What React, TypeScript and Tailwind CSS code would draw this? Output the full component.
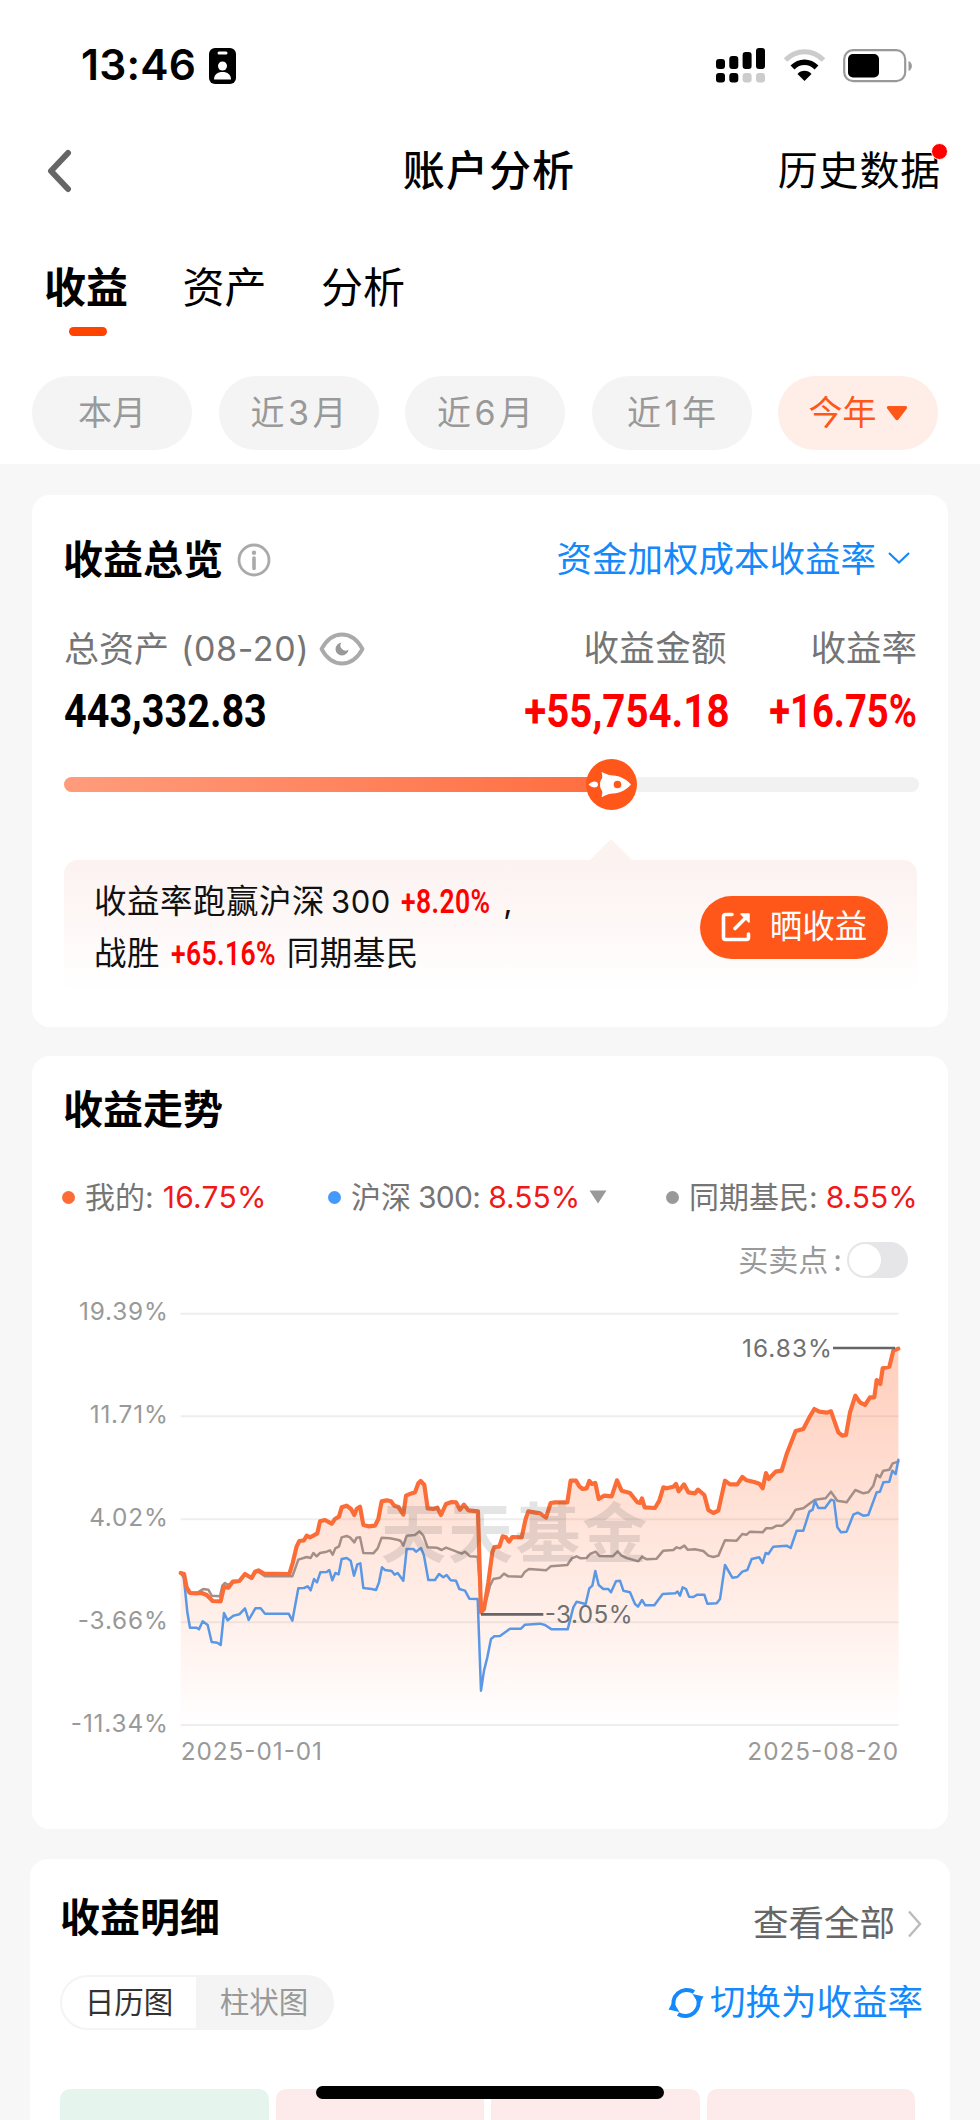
import React, { useState } from 'react';

type Point = [number, number];

const PERIODS = [['本月'], ['近', '3', '月'], ['近', '6', '月'], ['近', '1', '年']];
const TABS = ['收益', '资产', '分析'];

const parse = (s: string): Point[] =>
  s.trim().split(/\s+/).map((p) => p.split(',').map(Number) as Point);

const MINE = parse(`
62,402 72,405 80,445 90,462 110,463 125,462 140,468 150,478 158,486 182,487 192,443 205,446 218,428 238,426
255,405 275,417 285,398 295,394 312,404 388,405 398,372 410,322 418,306 432,304 440,290 450,295 460,290 472,283
480,247 495,243 508,250 515,254 525,240 537,233 545,205 560,200 573,210 583,228 590,210 600,203 610,258 625,262
645,260 655,240 665,187 680,184 693,187 703,200 715,204 730,227 738,170 752,164 765,160 775,133 782,126 793,138
803,208 820,210 832,206 843,228 858,195 875,189 888,190 900,212 912,197 925,214 954,217 963,520 972,510 985,430
997,340 1003,324 1018,323 1028,292 1038,295 1047,308 1057,294 1085,295 1097,240 1105,217 1140,223 1158,236
1172,192 1185,190 1222,190 1232,125 1248,125 1258,142 1268,150 1280,148 1288,126 1296,135 1306,132 1316,180
1332,170 1355,172 1371,124 1385,155 1410,162 1432,190 1440,192 1446,178 1454,205 1485,207 1498,185 1510,145
1520,148 1540,143 1548,135 1556,157 1572,136 1585,160 1605,163 1614,152 1633,168 1645,213 1660,222 1675,215
1695,125 1710,136 1732,136 1747,114 1760,124 1785,130 1798,134 1808,148 1818,102 1826,120 1847,98 1865,95
1880,45 1907,-24 1930,-30 1948,-65 1963,-90 1978,-82 2000,-79 2013,-83 2035,-20 2047,-10 2058,-12 2070,-80
2086,-130 2100,-110 2115,-102 2130,-125 2143,-125 2150,-177 2161,-165 2168,-212 2188,-217 2200,-265 2215,-271`);

const PEERS = parse(`
62,402 75,420 85,460 110,462 122,455 130,450 145,452 155,470 180,472 187,440 195,432 205,438 218,430 238,428
255,408 275,419 285,402 295,398 315,412 397,412 405,390 415,362 440,354 452,357 460,342 470,352 480,342 500,338
510,334 518,347 526,328 537,322 545,295 560,291 570,295 583,310 590,296 600,295 610,342 640,343 653,328 665,296
690,298 715,303 722,306 730,320 740,290 765,288 778,277 790,290 803,325 830,326 845,333 858,326 880,334 905,344
915,338 930,352 953,353 965,510 980,480 990,440 1000,420 1020,416 1032,404 1045,412 1085,413 1095,398 1107,390
1158,394 1172,382 1222,378 1235,358 1250,352 1262,358 1280,357 1290,345 1307,338 1318,351 1358,352 1373,337
1385,350 1400,357 1425,364 1435,367 1446,353 1460,361 1490,359 1510,335 1540,333 1550,325 1560,328 1573,320
1583,332 1605,331 1630,336 1645,350 1660,354 1675,350 1695,304 1730,305 1747,285 1760,287 1770,278 1808,280
1818,268 1835,268 1850,260 1867,260 1890,240 1907,212 1930,208 1950,193 1965,182 1997,178 2013,158 2032,185
2060,190 2086,153 2110,163 2125,160 2140,140 2150,107 2160,115 2170,95 2188,92 2198,73 2215,68`);

const CSI300 = parse(`
70,405 75,450 82,520 90,566 110,566 117,571 128,547 143,558 155,609 172,611 182,618 192,522 203,544 220,530
238,526 255,508 266,543 286,508 302,508 315,524 386,524 397,545 415,448 432,447 443,442 452,454 462,420 471,430
481,400 500,399 508,393 517,424 526,402 536,406 545,360 560,357 572,365 582,410 592,376 601,373 610,447 635,450
648,453 657,430 666,385 675,393 695,396 704,407 713,402 730,425 740,330 760,330 768,338 783,327 792,350 805,423
825,423 837,405 850,415 860,408 872,424 888,425 898,450 915,455 928,479 953,480 963,755 972,695 982,655 993,600
1003,592 1020,591 1050,569 1083,569 1095,557 1140,554 1155,558 1175,571 1223,571 1240,505 1250,488 1277,495
1288,448 1297,440 1306,396 1316,438 1330,450 1345,450 1353,460 1368,427 1380,425 1390,455 1410,460 1425,495
1434,503 1446,483 1456,499 1483,499 1508,465 1545,463 1553,458 1560,470 1568,445 1578,450 1587,473 1600,474
1612,467 1633,467 1642,494 1670,493 1680,480 1695,378 1717,416 1732,414 1747,398 1762,393 1775,360 1798,355
1808,372 1817,342 1825,345 1840,323 1880,320 1892,327 1910,275 1930,275 1948,218 1958,212 1965,185 1975,207
1995,207 2013,182 2022,185 2032,265 2043,280 2060,278 2080,227 2093,221 2110,230 2125,228 2150,160 2160,158
2170,130 2188,128 2197,95 2207,105 2215,62`);

const toPath = (pts: Point[]) => 'M' + pts.map(([x, y]) => `${x} ${y}`).join('L');

const GRID = [
  { y: -376, label: '19.39%' },
  { y: -68, label: '11.71%' },
  { y: 241, label: '4.02%' },
  { y: 550, label: '-3.66%' },
  { y: 858, label: '-11.34%' },
];

const StatusBar = () => (
  <div className="flex h-[100px] items-center justify-between pl-[81px] pr-[67px] pt-[31px]">
    <div className="flex items-center gap-[13px]">
      <span className="text-[42.500px] font-semibold leading-none tracking-[0.200px]">13:46</span>
      <svg width="27" height="36" viewBox="0 0 27 36">
        <rect width="27" height="36" rx="6" fill="#000" />
        <rect x="8.500" y="3.500" width="10" height="3" rx="1.500" fill="#fff" />
        <circle cx="13.500" cy="18" r="4.500" fill="#fff" />
        <path d="M5 31.500c0-5 3.500-7.500 8.500-7.500s8.500 2.500 8.500 7.500z" fill="#fff" />
      </svg>
    </div>
    <div className="flex items-center">
      <svg width="49" height="36" viewBox="0 0 49 36">
        <rect x="0" y="11" width="9" height="10" rx="3" />
        <rect x="13.300" y="8" width="9" height="13" rx="3" />
        <rect x="26.600" y="4" width="9" height="17" rx="3" />
        <rect x="40" y="0" width="9" height="21" rx="3" />
        <rect x="0" y="25" width="9" height="9.500" rx="3" />
        <rect x="13.300" y="25" width="9" height="9.500" rx="3" />
        <rect x="26.600" y="25" width="9" height="9.500" rx="3" fill="#ccc" />
        <rect x="40" y="25" width="9" height="9.500" rx="3" fill="#ccc" />
      </svg>
      <svg className="ml-[18px]" width="43" height="36" viewBox="0 0 43 36" fill="none">
        <path d="M2.500 12C13.500 1 29.500 1 40.500 12" stroke="#ccc" strokeWidth="5" />
        <path d="M9.500 19.500C16.500 12.500 26.500 12.500 33.500 19.500" stroke="#000" strokeWidth="5.500" />
        <path d="M21.500 33L14.500 26c3.500-4.200 10.500-4.200 14 0z" fill="#000" />
      </svg>
      <svg className="ml-[17px]" width="70" height="36" viewBox="0 0 70 36" fill="none">
        <rect x="1.200" y="2.200" width="61" height="31" rx="9" stroke="#999" strokeWidth="2.200" />
        <rect x="5" y="6" width="31" height="23.500" rx="5" fill="#000" />
        <path d="M65.500 13c4.500 1.500 4.500 8.500 0 10z" fill="#999" />
      </svg>
    </div>
  </div>
);

const NavBar = () => (
  <div className="grid h-[140px] grid-cols-3 items-center pl-[46px] pr-[39px] pt-[2px]">
    <svg width="26" height="44" viewBox="0 0 26 44" fill="none">
      <path d="M22 4L5 22l17 18" stroke="#666" strokeWidth="6" strokeLinecap="round" strokeLinejoin="round" />
    </svg>
    <h1 className="-ml-[9px] text-center text-[42px] font-medium leading-none tracking-[1.100px]">账户分析</h1>
    <div className="relative justify-self-end text-[40px] leading-none tracking-[0.800px]">
      历史数据
      <span className="absolute -right-[7px] -top-[8px] h-[17px] w-[17px] rounded-full border border-white bg-[#f00]" />
    </div>
  </div>
);

const Tabs = () => {
  const [tab, setTab] = useState('收益');
  return (
    <div className="flex h-[136px] gap-[54.500px] pl-[44px] pt-[25px]">
      {TABS.map((t) => (
        <button key={t} onClick={() => setTab(t)} className="flex flex-col items-center">
          <span className={t === tab ? 'text-[42px] font-bold leading-[46px]' : 'text-[42px] leading-[46px]'}>{t}</span>
          {t === tab && <span className="ml-[3px] mt-[16px] h-[9px] w-[38px] rounded-full bg-[#ff4400]" />}
        </button>
      ))}
    </div>
  );
};

const Periods = () => (
  <div className="flex h-[88px] gap-[26.500px] px-[32px]">
    {PERIODS.map((p) => (
      <button
        key={p.join('')}
        className="flex h-[74px] w-[160px] items-center justify-center gap-[3.500px] rounded-full bg-[#f4f4f4] text-[34px] leading-none text-[#999]"
      >
        {p.map((part) => (
          <span key={part}>{part}</span>
        ))}
      </button>
    ))}
    <button className="flex h-[74px] w-[160px] items-center justify-center gap-[9px] rounded-full bg-[#ffeee8] text-[34px] leading-none text-[#ff5719]">
      今年
      <svg width="22" height="15" viewBox="0 0 22 15">
        <path d="M2.500 0h17c1.500 0 2.200 1.500 1.200 2.700L12.500 13.500c-.8 1-2.200 1-3 0L1.300 2.700C.3 1.500 1 0 2.500 0z" fill="#ff5719" />
      </svg>
    </button>
  </div>
);

const Din: React.FC<{ className: string; children: React.ReactNode }> = ({ className, children }) => (
  <span className={`inline-block font-['Roboto'] leading-none ${className}`}>{children}</span>
);

const Overview = () => (
  <section className="h-[532px] rounded-[18px] bg-white px-[31px] pt-[40px]">
    <div className="flex h-[50px] items-center justify-between">
      <div className="flex items-center gap-[14px]">
        <h2 className="text-[40px] font-bold leading-none">收益总览</h2>
        <svg width="34" height="34" viewBox="0 0 34 34" fill="none" stroke="#aaa">
          <circle cx="17" cy="17" r="15" strokeWidth="2.800" />
          <path d="M17 15v10.500" strokeWidth="3.600" strokeLinecap="round" />
          <circle cx="17" cy="9.700" r="2.200" fill="#aaa" stroke="none" />
        </svg>
      </div>
      <button className="mr-[6px] flex items-center gap-[11px] text-[35.500px] leading-none text-[#1389fb]">
        资金加权成本收益率
        <svg className="-mt-[4px]" width="24" height="14" viewBox="0 0 24 14" fill="none">
          <path d="M2 2l10 9.500L22 2" stroke="#1389fb" strokeWidth="2.200" />
        </svg>
      </button>
    </div>

    <div className="ml-[1px] mt-[39px] flex justify-between">
      <div>
        <div className="flex h-[50px] items-center text-[35px] leading-none text-[#757575]">
          总资产<span className="ml-[12px] text-[34px] tracking-[0.600px]">(08-20)</span>
          <svg className="ml-[10px]" width="46" height="34" viewBox="0 0 46 34" fill="none">
            <path d="M2.500 17C8 7 15 2.500 23 2.500S38 7 43.500 17C38 27 31 31.500 23 31.500S8 27 2.500 17z" stroke="#aaa" strokeWidth="3.800" strokeLinejoin="round" />
            <path d="M22.500 10.500a6.500 6.500 0 1 0 7 7 5 5 0 0 1-7-7z" fill="#999" />
          </svg>
        </div>
        <Din className="mt-[14px] origin-left scale-x-[0.860] text-[46px] font-bold text-black">443,332.83</Din>
      </div>
      <div className="flex gap-[41px] text-right">
        <div className="w-[205px]">
          <div className="mr-[2px] flex h-[50px] items-center justify-end text-[35.500px] leading-none tracking-[0.400px] text-[#757575]">收益金额</div>
          <Din className="mt-[14px] -ml-[40px] origin-right scale-x-[0.875] text-[46px] font-bold text-[#f00]">+55,754.18</Din>
        </div>
        <div className="w-[147px]">
          <div className="flex h-[50px] items-center justify-end text-[35.500px] leading-none text-[#757575]">收益率</div>
          <Din className="mt-[14px] -ml-[40px] origin-right scale-x-[0.830] text-[46px] font-bold text-[#f00]">+16.75%</Din>
        </div>
      </div>
    </div>

    <div className="relative ml-[1px] mt-[43px] h-[15px] w-[855px] rounded-full bg-[#f1f1f1]">
      <div className="h-full w-[548px] rounded-l-full bg-linear-to-r from-[#ff9c7c] to-[#ff6c3d]" />
      <svg className="absolute left-[522px] top-[-18px]" width="51" height="51" viewBox="0 0 51 51">
        <circle cx="25.500" cy="25.500" r="25.500" fill="#ff5719" />
        <path d="M15.500 13c1 0 2 .8 3 1.300 2.500 1.200 5 2 8.500 2.200 7 .5 13 3.500 18 9-5 5.500-11 8.500-18 9-3.500.2-6 1-8.500 2.200-1 .5-2 1.300-3 1.300.8-2.500 1-4.500.5-6.500-1.500-1.500-2-3.700-2-6s.5-4.500 2-6c.5-2 .3-4-.5-6.500z" fill="#fff" />
        <circle cx="31.500" cy="25.500" r="3.800" fill="#ff5719" />
        <path d="M2.500 25.500c2-2 4-3 6-3s3.500 1.200 3.500 3-1.500 3-3.500 3-4-1-6-3z" fill="#fff" />
      </svg>
    </div>

    <div className="relative ml-[1px] mt-[68px] flex h-[134px] w-[853px] items-center justify-between rounded-[14px] bg-linear-to-b from-[#fcf2f0] to-white pl-[30px] pr-[29px]">
      <svg className="absolute -top-[21px] left-[525px]" width="44" height="22" viewBox="0 0 44 22">
        <path d="M0 22L20 2q2-2 4 0l20 20z" fill="#fcf2f0" />
      </svg>
      <div className="pt-[1px] text-[32.500px] leading-[52px] tracking-[0.500px] text-[#111]">
        <div>
          收益率跑赢沪深<span className="ml-[6px] text-[31px]">300</span>
          <Din className="ml-[10px] -mr-[22px] origin-left scale-x-[0.780] text-[34px] font-semibold text-[#f00]">+8.20%</Din> ,
        </div>
        <div>
          战胜
          <Din className="ml-[11px] -mr-[19px] origin-left scale-x-[0.780] text-[34px] font-semibold text-[#f00]">+65.16%</Din>
          同期基民
        </div>
      </div>
      <button className="flex h-[63px] w-[188px] items-center justify-center gap-[19px] rounded-full bg-[#ff5719] text-[32.500px] leading-none text-white">
        <svg width="30" height="30" viewBox="0 0 30 30" fill="none" stroke="#fff" strokeWidth="3.600" strokeLinecap="round" strokeLinejoin="round">
          <path d="M11 2.500H4.500a2 2 0 0 0-2 2v21a2 2 0 0 0 2 2h21a2 2 0 0 0 2-2V22" />
          <path d="M14 16.500L26 4.500" />
          <path d="M20 2h8v8z" fill="#fff" strokeWidth="1.500" />
        </svg>
        晒收益
      </button>
    </div>
  </section>
);

const Dot: React.FC<{ className: string }> = ({ className }) => (
  <span className={`mr-[10px] h-[13px] w-[13px] rounded-full ${className}`} />
);

const TrendChart = () => (
  <svg className="mt-[11px] block" width="856" height="490" viewBox="-294 -450 2568 1470">
    <defs>
      <linearGradient id="area" gradientUnits="userSpaceOnUse" x1="0" y1="-271" x2="0" y2="858">
        <stop offset="0" stopColor="#ff6b35" stopOpacity="0.330" />
        <stop offset="0.700" stopColor="#ff6b35" stopOpacity="0.110" />
        <stop offset="1" stopColor="#ff6b35" stopOpacity="0" />
      </linearGradient>
    </defs>
    {GRID.map((g) => (
      <g key={g.label}>
        <path d={`M62 ${g.y}H2216`} stroke="#eee" strokeWidth="6" />
        <text x="26" y={g.y + 20} textAnchor="end" fontSize="73" letterSpacing="2.500" fill="#999">{g.label}</text>
      </g>
    ))}
    <path d={`${toPath(MINE)}L2216 858L62 858Z`} fill="url(#area)" />
    <g fill="none" strokeLinejoin="round" strokeLinecap="round">
      <path d={toPath(PEERS)} stroke="#a48f88" strokeWidth="7.500" />
      <path d={toPath(CSI300)} stroke="#5a98e6" strokeWidth="7.500" />
      <path d={toPath(MINE)} stroke="#fb6c36" strokeWidth="12.500" />
    </g>
    <text x="662" y="355" fontSize="196" fontWeight="700" textLength="800" fill="#555" fillOpacity="0.160">天天基金</text>
    <g fill="#707070" stroke="none" fontSize="73">
      <path d="M963 526H1150M2019 -273H2205" stroke="#666" strokeWidth="8" />
      <text x="1154" y="553" textLength="264">-3.05%</text>
      <text x="1746" y="-245" textLength="270">16.83%</text>
    </g>
    <g fontSize="73" fill="#999">
      <text x="62" y="963" textLength="424">2025-01-01</text>
      <text x="1762" y="963" textLength="452">2025-08-20</text>
    </g>
  </svg>
);

const Trend = () => (
  <section className="mt-[29px] h-[773px] rounded-[18px] bg-white px-[30px] pt-[29px]">
    <h2 className="ml-[1px] flex h-[50px] items-center text-[40px] font-bold leading-none">收益走势</h2>
    <div className="mt-[44px] flex h-[36px] items-center text-[30px] leading-none text-[#757575]">
      <div className="flex w-[266px] items-center">
        <Dot className="bg-[#ff6b35]" />我的:<span className="ml-[9px] tracking-[0.300px] text-[#f01818]">16.75%</span>
      </div>
      <div className="flex w-[338px] items-center">
        <Dot className="bg-[#4499ff]" />沪深<span className="ml-[7px] tracking-[-0.700px]">300:</span>
        <span className="ml-[8px] text-[#f01818]">8.55%</span>
        <svg className="ml-[9px]" width="18" height="14" viewBox="0 0 18 14">
          <path d="M0.500 0.500h17L9 13.500z" fill="#999" />
        </svg>
      </div>
      <div className="flex items-center">
        <Dot className="bg-[#999]" />同期基民:<span className="ml-[8px] text-[#f01818]">8.55%</span>
      </div>
    </div>
    <div className="mr-[10px] mt-[27px] flex h-[36px] items-center justify-end text-[30px] leading-none text-[#999]">
      买卖点<span className="mx-[5px]">:</span>
      <span className="h-[36px] w-[61px] rounded-full bg-[#e6e6e8] p-[2px]">
        <span className="block h-[32px] w-[32px] rounded-full bg-white" />
      </span>
    </div>
    <TrendChart />
  </section>
);

const Detail = () => (
  <section className="-mx-[2px] mt-[30px] h-[270px] rounded-t-[18px] bg-white pl-[30px] pr-[28px] pt-[34px]">
    <div className="flex h-[50px] items-center justify-between">
      <h2 className="text-[40px] font-bold leading-none">收益明细</h2>
      <button className="mt-[12px] flex items-center gap-[12px] text-[35.500px] leading-none text-[#666]">
        查看全部
        <svg width="15" height="28" viewBox="0 0 15 28" fill="none">
          <path d="M2 1.500L13 14 2 26.500" stroke="#bbb" strokeWidth="2.400" />
        </svg>
      </button>
    </div>
    <div className="mt-[32px] flex h-[55px] items-center justify-between">
      <div className="flex h-[55px] w-[274px] overflow-hidden rounded-full border-2 border-[#f4f4f4] bg-[#f4f4f4] text-[29.500px] leading-none">
        <button className="w-[134px] bg-white text-[#333]">日历图</button>
        <button className="flex-1 text-[#999]">柱状图</button>
      </div>
      <button className="mr-[-1px] flex items-center gap-[6px] text-[35.500px] leading-none text-[#1389fb]">
        <svg width="36" height="36" viewBox="0 0 36 36" fill="none">
          <path d="M6.500 24A13.500 13.500 0 0 1 26 7" stroke="#1389fb" strokeWidth="4" />
          <path d="M29.500 12A13.500 13.500 0 0 1 10 29" stroke="#1389fb" strokeWidth="4" />
          <path d="M0.500 24.500L5 16.500 11.500 27z" fill="#1389fb" />
          <path d="M35.500 11.500L31 19.500 24.500 9z" fill="#1389fb" />
        </svg>
        切换为收益率
      </button>
    </div>
    <div className="mt-[59px] grid w-[855px] grid-cols-4 gap-[7px]">
      <div className="h-[40px] rounded-t-[10px] bg-[#e5f5ed]" />
      <div className="h-[40px] rounded-t-[10px] bg-[#fdeaea]" />
      <div className="h-[40px] rounded-t-[10px] bg-[#fdeaea]" />
      <div className="h-[40px] rounded-t-[10px] bg-[#fdeaea]" />
    </div>
  </section>
);

export default function App() {
  return (
    <div className="relative h-[2120px] w-[980px] overflow-hidden bg-[#f7f7f7] font-['Inter','Noto_Sans_CJK_SC',sans-serif] text-black">
      <header className="h-[464px] bg-white">
        <StatusBar />
        <NavBar />
        <Tabs />
        <Periods />
      </header>
      <main className="px-[32px] pt-[31px]">
        <Overview />
        <Trend />
        <Detail />
      </main>
      <div className="absolute bottom-[21px] left-[316px] h-[13px] w-[348px] rounded-full bg-black" />
    </div>
  );
}
